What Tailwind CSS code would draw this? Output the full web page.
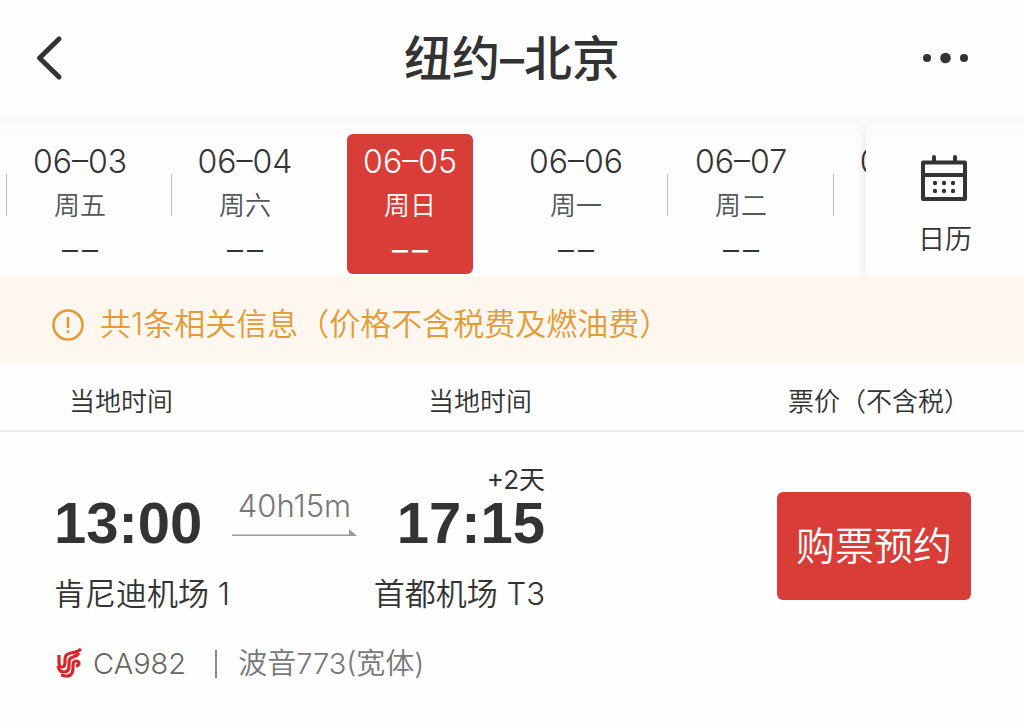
<!DOCTYPE html>
<html lang="zh-CN">

<head>
    <meta charset="UTF-8">
    <meta name="viewport" content="width=device-width, initial-scale=1.0">
    <title>纽约–北京</title>
    <script src="https://cdn.jsdelivr.net/npm/@tailwindcss/browser@4"></script>
</head>

<body class="min-h-screen bg-[#fefefe] text-[#333] font-[350] font-['Inter','Noto_Sans_CJK_SC',sans-serif]">
    <!-- Header -->
    <header class="flex items-center justify-between h-[116px] px-8">
        <button type="button" aria-label="返回" class="w-16">
            <svg class="w-8 h-12" viewBox="0 0 32 48" fill="none" stroke="#333" stroke-width="5" stroke-linecap="round" stroke-linejoin="round">
                <path d="M27 5L7.500 24L27 43" />
            </svg>
        </button>
        <h1 class="pt-0.5 text-[48px] leading-[64px] font-medium">纽约–北京</h1>
        <button type="button" aria-label="更多" class="w-16 flex justify-end pr-[23px]">
            <svg class="w-12 h-12 shrink-0" viewBox="0 0 48 48" fill="#333">
                <circle cx="6" cy="24" r="4" />
                <circle cx="24.500" cy="24" r="5.300" />
                <circle cx="43" cy="24" r="4" />
            </svg>
        </button>
    </header>

    <!-- Dates -->
    <nav class="flex h-40 overflow-hidden bg-linear-to-b from-[#f9f9f9] to-[#fefefe] to-20%">
        <ul class="flex flex-1 min-w-0 overflow-hidden pt-[18px] pl-1.5 text-[32px]">
            <li class="flex items-start shrink-0 w-[165px] h-[140px] gap-2.5">
                <span class="w-px h-[42px] mt-10 bg-[#bbb]"></span>
                <button type="button" class="flex flex-col items-center w-[126px] h-full pt-1.5 rounded-md leading-[44px]">
                    <span>06–03</span><span class="text-[26px] leading-[44px] text-[#555]">周五</span>
                    <span class="flex gap-1"><span>–</span><span>–</span></span>
                </button>
            </li>
            <li class="flex items-start shrink-0 w-[165px] h-[140px] gap-2.5">
                <span class="w-px h-[42px] mt-10 bg-[#bbb]"></span>
                <button type="button" class="flex flex-col items-center w-[126px] h-full pt-1.5 rounded-md leading-[44px]">
                    <span>06–04</span><span class="text-[26px] leading-[44px] text-[#555]">周六</span>
                    <span class="flex gap-1"><span>–</span><span>–</span></span>
                </button>
            </li>
            <li class="flex items-start shrink-0 w-[166px] h-[140px] gap-2.5">
                <span class="w-px"></span>
                <button type="button" aria-current="date" class="flex flex-col items-center w-[126px] h-full pt-1.5 rounded-md leading-[44px] bg-[#d93d38] text-white">
                    <span>06–05</span><span class="text-[26px] leading-[44px]">周日</span>
                    <span class="flex gap-1 font-normal"><span>–</span><span>–</span></span>
                </button>
            </li>
            <li class="flex items-start shrink-0 w-[165px] h-[140px] gap-2.5">
                <span class="w-px"></span>
                <button type="button" class="flex flex-col items-center w-[126px] h-full pt-1.5 rounded-md leading-[44px]">
                    <span>06–06</span><span class="text-[26px] leading-[44px] text-[#555]">周一</span>
                    <span class="flex gap-1"><span>–</span><span>–</span></span>
                </button>
            </li>
            <li class="flex items-start shrink-0 w-[166px] h-[140px] gap-2.5">
                <span class="w-px h-[42px] mt-10 bg-[#bbb]"></span>
                <button type="button" class="flex flex-col items-center w-[126px] h-full pt-1.5 rounded-md leading-[44px]">
                    <span>06–07</span><span class="text-[26px] leading-[44px] text-[#555]">周二</span>
                    <span class="flex gap-1"><span>–</span><span>–</span></span>
                </button>
            </li>
            <li class="flex items-start shrink-0 w-[165px] h-[140px] gap-2.5">
                <span class="w-px h-[42px] mt-10 bg-[#bbb]"></span>
                <button type="button" class="flex flex-col items-center w-[126px] h-full pt-1.5 rounded-md leading-[44px]">
                    <span>06–08</span>
                </button>
            </li>
        </ul>
        <button type="button" class="flex flex-col items-center w-[158px] pt-[38px] shadow-[-8px_8px_12px_-8px_rgba(0,0,0,0.12)]">
            <svg class="w-12 h-12" viewBox="0 0 48 48" fill="none" stroke="#333" stroke-width="4" stroke-linejoin="round" stroke-linecap="round">
                <path d="M2 8.500H44V45H2ZM2 21H44M13 3V8M34 3V8" />
                <g fill="#333" stroke="none">
                    <circle cx="14" cy="29" r="2.200" />
                    <circle cx="23" cy="29" r="2.200" />
                    <circle cx="32" cy="29" r="2.200" />
                    <circle cx="14" cy="37" r="2.200" />
                    <circle cx="23" cy="37" r="2.200" />
                    <circle cx="32" cy="37" r="2.200" />
                </g>
            </svg>
            <span class="mt-4 text-[27px] leading-[44px]">日历</span>
        </button>
    </nav>

    <!-- Notice -->
    <p class="flex items-center gap-4 h-[89px] pl-[52px] pt-2 bg-[#fef7f0] text-[#e59a35] text-[31px]">
        <svg class="w-8 h-8 shrink-0" viewBox="0 0 32 32" fill="none" stroke="#e59a35" stroke-width="2.500">
            <circle cx="16" cy="16" r="14.500" />
            <path d="M16 8V19M16 21.500V24" />
        </svg>
        <span>共1条相关信息（价格不含税费及燃油费）</span>
    </p>

    <!-- Column titles -->
    <div class="grid grid-cols-[359px_360px_1fr] items-center h-[67px] pl-[69px] pt-2 border-b-2 border-[#efefef] text-[26px]">
        <span>当地时间</span>
        <span>当地时间</span>
        <span>票价（不含税）</span>
    </div>

    <!-- Flight -->
    <main class="flex justify-between pl-[54px] pr-[53px] pt-8">
        <section>
            <div class="flex">
                <div class="w-[178px] pt-7">
                    <time class="block text-[58px] leading-[62px] font-bold font-['Liberation_Sans',sans-serif]">13:00</time>
                    <p class="mt-[18px] text-[31px] leading-[44px] whitespace-nowrap">肯尼迪机场 1</p>
                </div>
                <div class="w-[125px] pt-5 text-center text-[#777]">
                    <span class="block text-[31px] leading-[44px] font-light">40h15m</span>
                    <svg class="w-full h-2" viewBox="0 0 125 8" fill="#999">
                        <path d="M0 6.500H117V1L125 8H0Z" />
                    </svg>
                </div>
                <div class="w-[188px] text-right">
                    <span class="block text-[26px] leading-7 pt-0.5 -mb-0.5 font-normal">+2天</span>
                    <time class="block text-[58px] leading-[62px] font-bold font-['Liberation_Sans',sans-serif]">17:15</time>
                    <p class="mt-[18px] text-[31px] leading-[44px] whitespace-nowrap">首都机场 T3</p>
                </div>
            </div>
            <div class="flex items-center mt-[26px] text-[29px] leading-[44px] font-light text-[#666]">
                <svg class="w-7 h-8 mr-[11px]" viewBox="0 0 28 32" fill="none" stroke="#d8262c" stroke-width="3.200">
                    <path d="M5 7V14Q5 19 8 19Q11 19 11 14V11Q11 6 17 5Q24 4 27 1" />
                    <path d="M4 18Q5 24 10 24Q15 24 15 18V14Q15 10 19 9Q23 8 25 5" />
                    <path d="M7 27Q19 31 19 20V17Q19 13 22 13Q25 13 25 16Q24 18 22 18" />
                </svg>
                <span>CA982</span>
                <span class="w-0.5 h-7 ml-[29px] mr-[21px] bg-[#888]"></span>
                <span class="font-[350] text-[#777]">波音773(宽体)</span>
            </div>
        </section>
        <button type="button" class="w-[194px] h-[108px] mt-7 rounded-md bg-[#d93d38] text-white text-[39px]">购票预约</button>
    </main>
</body>

</html>
